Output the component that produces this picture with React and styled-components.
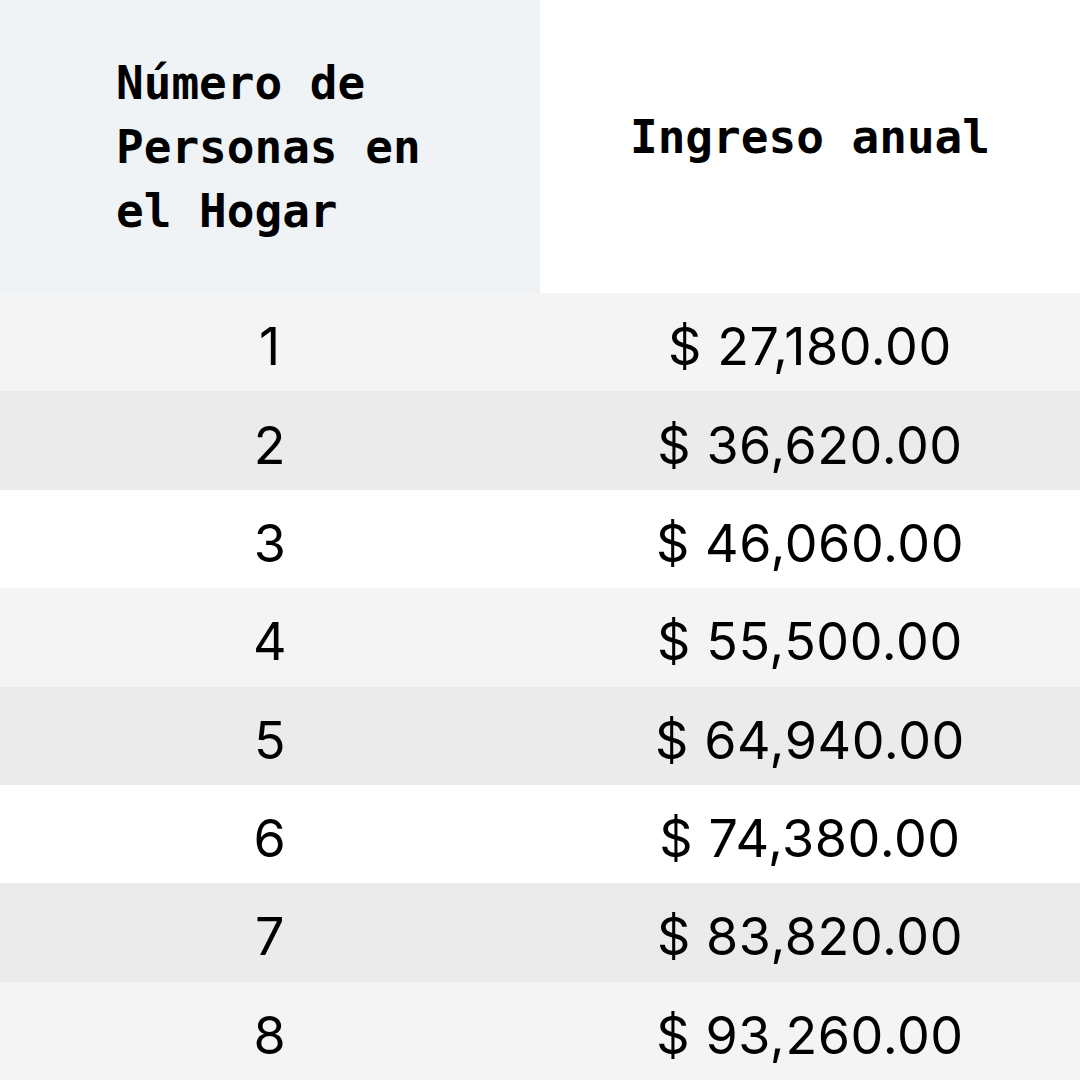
import styled, { createGlobalStyle } from "styled-components"

const rows = [
  [1, "$ 27,180.00", "light"],
  [2, "$ 36,620.00", "gray"],
  [3, "$ 46,060.00", "white"],
  [4, "$ 55,500.00", "light"],
  [5, "$ 64,940.00", "gray"],
  [6, "$ 74,380.00", "white"],
  [7, "$ 83,820.00", "gray"],
  [8, "$ 93,260.00", "light"],
]

const tones = {
  light: "#f4f4f4",
  gray: "#ebebeb",
  white: "#ffffff",
}

export default function App() {
  return (
    <>
      <Global />
      <Table>
        <HeadCell tone="#eff3f6" align="left">
          <HeadText>Número de<br />Personas en<br />el Hogar</HeadText>
        </HeadCell>
        <HeadCell tone="#ffffff" align="center">
          <HeadText>Ingreso anual</HeadText>
        </HeadCell>

        {rows.map(([n, amount, tone]) => (
          <Row key={n} tone={tones[tone]}>
            <Cell>{n}</Cell>
            <Cell>{amount}</Cell>
          </Row>
        ))}
      </Table>
    </>
  )
}

const Global = createGlobalStyle`
  html, body {
    margin: 0;
    padding: 0;
    background: #ffffff;
  }
`

const Table = styled.main`
  width: 1080px;
  height: 1080px;
  display: grid;
  grid-template-columns: 540px 540px;
  grid-template-rows: 293px repeat(8, 1fr);
  color: #000;
`

const HeadCell = styled.div`
  background: ${p => p.tone};
  display: flex;
  align-items: center;
  justify-content: ${p => p.align === "left" ? "flex-start" : "center"};
  padding: ${p => p.align === "left" ? "0 0 0 116px" : "0 0 20px 0"};
`

const HeadText = styled.h2`
  margin: 0;
  font-family: "DejaVu Sans Mono", "Liberation Mono", monospace;
  font-weight: 700;
  font-size: 46px;
  line-height: 64px;
`

const Row = styled.div`
  grid-column: 1 / 3;
  display: grid;
  grid-template-columns: 540px 540px;
  background: ${p => p.tone};
`

const Cell = styled.div`
  display: flex;
  align-items: center;
  justify-content: center;
  padding-top: 9px;
  font-family: Inter, "Noto Sans", sans-serif;
  font-weight: 400;
  font-size: 52px;
  letter-spacing: 0.6px;
`
